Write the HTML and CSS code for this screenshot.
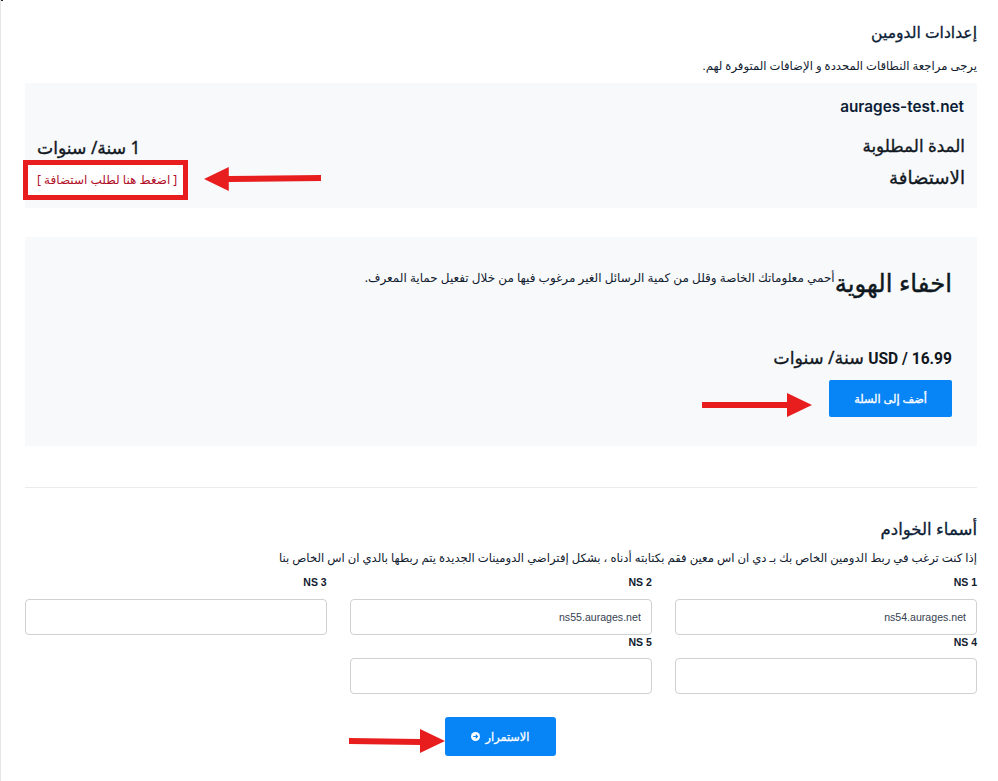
FILE: index.html
```html
<!DOCTYPE html>
<html lang="ar" dir="rtl">
<head>
<meta charset="utf-8">
<title>إعدادات الدومين</title>
<link rel="stylesheet" href="styles.css">
</head>
<body>
<div class="corner"></div>
<main class="page">
  <h2 class="section-title title-domain">إعدادات الدومين</h2>
  <p class="desc">يرجى مراجعة النطاقات المحددة و الإضافات المتوفرة لهم.</p>

  <section class="domain-panel">
    <h3 class="domain-name">aurages-test.net</h3>
    <div class="row">
      <span class="row-label">المدة المطلوبة</span>
      <span class="row-label row-value">1 سنة/ سنوات</span>
    </div>
    <div class="row hosting-row">
      <span class="row-label hosting-label">الاستضافة</span>
      <a class="hosting-link">[ اضغط هنا لطلب استضافة ]</a>
    </div>
  </section>

  <section class="addon-panel">
    <div class="addon-head">
      <h3 class="addon-title">اخفاء الهوية</h3>
      <p class="addon-desc">أحمي معلوماتك الخاصة وقلل من كمية الرسائل الغير مرغوب فيها من خلال تفعيل حماية المعرف.</p>
    </div>
    <div class="price"><span class="price-num">16.99 / USD</span> <span class="price-unit">سنة/ سنوات</span></div>
    <button class="btn add-btn" type="button">أضف إلى السلة</button>
  </section>

  <hr class="divider">

  <h2 class="section-title title-ns">أسماء الخوادم</h2>
  <p class="desc ns-desc">إذا كنت ترغب في ربط الدومين الخاص بك بـ دي ان اس معين فقم بكتابته أدناه ، بشكل إفتراضي الدومينات الجديدة يتم ربطها بالدي ان اس الخاص بنا</p>

  <div class="ns-grid">
    <label class="field"><span class="field-label">NS 1</span><input class="input" dir="ltr" value="ns54.aurages.net"></label>
    <label class="field"><span class="field-label">NS 2</span><input class="input" dir="ltr" value="ns55.aurages.net"></label>
    <label class="field"><span class="field-label">NS 3</span><input class="input" dir="ltr"></label>
    <label class="field"><span class="field-label">NS 4</span><input class="input" dir="ltr"></label>
    <label class="field"><span class="field-label">NS 5</span><input class="input" dir="ltr"></label>
  </div>

  <div class="actions">
    <button class="btn continue-btn" type="button">الاستمرار
      <svg class="btn-icon" viewBox="0 0 12 12" aria-hidden="true"><circle cx="6" cy="6" r="6" fill="#fff"/><path d="M3 6h5.4M6.2 3.6 8.7 6 6.2 8.4" fill="none" stroke="#0784f5" stroke-width="1.5"/></svg>
    </button>
  </div>
</main>

<svg class="arrow arrow-host" viewBox="0 0 118 26" aria-hidden="true"><path d="M0 13 25 1v9l93-1v6l-93 1v9z" fill="#e81e1e"/></svg>
<svg class="arrow arrow-cart" viewBox="0 0 110 26" aria-hidden="true"><path d="M110 13 85 1v9H0v6h85v9z" fill="#e81e1e"/></svg>
<svg class="arrow arrow-next" viewBox="0 0 96 26" aria-hidden="true"><path d="M96 13 71 1v10L0 10v6l71 1v8z" fill="#e81e1e"/></svg>
</body>
</html>
```
FILE: styles.css
```css
* { box-sizing: border-box; }
html, body { margin: 0; padding: 0; background: #fff; }
body {
  position: relative;
  height: 781px;
  overflow: hidden;
  border-left: 1px solid #e6e6e6;
  color: #0b2035;
  font-family: "Noto Sans", "DejaVu Sans", sans-serif;
}
.corner {
  position: absolute;
  left: -1px;
  top: 0;
  width: 3px;
  height: 16px;
  border-left: 1px solid #222;
  border-top: 1px solid #222;
}
.page { padding: 23px 21px 0 24px; }
.section-title {
  margin: 0;
  line-height: 19px;
  font-weight: 400;
  -webkit-text-stroke: 0.3px currentColor;
  color: #0b2035;
}
.title-domain { font-size: 15.6px; }
.title-ns { font-size: 16.6px; }
.desc {
  margin: 15px 0 0;
  font-size: 11.65px;
  line-height: 18px;
  font-weight: 400;
  color: #10202f;
  white-space: nowrap;
}
.domain-panel {
  margin-top: 8px;
  height: 125px;
  padding: 14px 13px 0 13px;
  background: #f8f9fb;
}
.domain-name {
  margin: 0;
  font-family: Inter, "DejaVu Sans", sans-serif;
  font-size: 15.3px;
  line-height: 20px;
  font-weight: 600;
  color: #0b2035;
  text-align: right;
}
.row {
  display: flex;
  justify-content: space-between;
  align-items: flex-start;
  margin-top: 18px;
}
.hosting-row { margin-top: 7px; }
.row-label {
  margin-right: -1px;
  font-size: 16.8px;
  line-height: 22px;
  font-weight: 400;
  -webkit-text-stroke: 0.35px currentColor;
  color: #11181f;
}
.row-value {
  margin: 2px 0 0 -1px;
  font-size: 17.2px;
}
.hosting-label { font-size: 18.2px; }
.hosting-link {
  display: block;
  width: 165px;
  height: 40px;
  margin: -6px 0 0 -15px;
  padding-left: 9px;
  border: 5px solid #e81e1e;
  background: #fff;
  font-size: 12px;
  line-height: 30px;
  text-align: left;
  white-space: nowrap;
  color: #b00d28;
}
.addon-panel {
  margin-top: 29px;
  height: 209px;
  padding: 30px 25px 0;
  background: #f8f9fb;
}
.addon-head { display: flex; align-items: flex-start; }
.addon-title {
  margin: 0;
  font-size: 24.4px;
  line-height: 32px;
  font-weight: 400;
  -webkit-text-stroke: 0.4px currentColor;
  color: #0e1820;
}
.addon-desc {
  margin: 2px 0 0;
  font-size: 12px;
  line-height: 18px;
  color: #10202f;
  white-space: nowrap;
}
.price {
  margin-top: 47px;
  height: 22px;
  line-height: 22px;
  color: #11181f;
}
.price-num {
  font-family: Roboto, "DejaVu Sans", sans-serif;
  font-size: 15.6px;
  font-weight: 700;
}
.price-unit {
  font-size: 17.5px;
  -webkit-text-stroke: 0.3px currentColor;
}
.btn {
  display: inline-flex;
  align-items: center;
  justify-content: center;
  border: 0;
  border-radius: 2px;
  background: #0784f5;
  color: #fff;
  font-family: inherit;
  font-size: 11.3px;
  font-weight: 400;
  -webkit-text-stroke: 0.3px currentColor;
}
.add-btn { display: flex; width: 123px; height: 37px; margin-top: 12px; }
.divider { margin: 41px 0 0; border: 0; border-top: 1px solid #e9ecef; }
.divider + .section-title { margin-top: 31px; }
.ns-desc { margin-top: 11px; }
.ns-grid {
  display: grid;
  grid-template-columns: repeat(3, 1fr);
  column-gap: 23.5px;
  margin-top: 8px;
}
.field { display: block; }
.field-label {
  display: block;
  font-family: "Liberation Sans", sans-serif;
  font-size: 10.5px;
  line-height: 14px;
  font-weight: 700;
  color: #10202f;
}
.field .input { margin-top: 10px; }
.field:nth-child(n+4) .input { margin-top: 9px; }
.input {
  display: block;
  width: 100%;
  height: 36px;
  padding: 0 10px;
  border: 1px solid #cfd0d2;
  border-radius: 4px;
  background: #fff;
  color: #374151;
  font-family: "Liberation Sans", sans-serif;
  font-size: 10.6px;
  text-align: right;
  outline: none;
}
.actions { display: flex; justify-content: center; margin-top: 23px; padding-right: 2px; }
.continue-btn { width: 111px; height: 39px; border-radius: 3px; gap: 6px; }
.btn-icon { width: 9px; height: 9px; }
.arrow { position: absolute; display: block; }
.arrow-host { left: 203px; top: 166px; width: 117px; height: 26px; }
.arrow-cart { left: 701px; top: 392px; width: 110px; height: 26px; }
.arrow-next { left: 348px; top: 728px; width: 96px; height: 26px; }
```
